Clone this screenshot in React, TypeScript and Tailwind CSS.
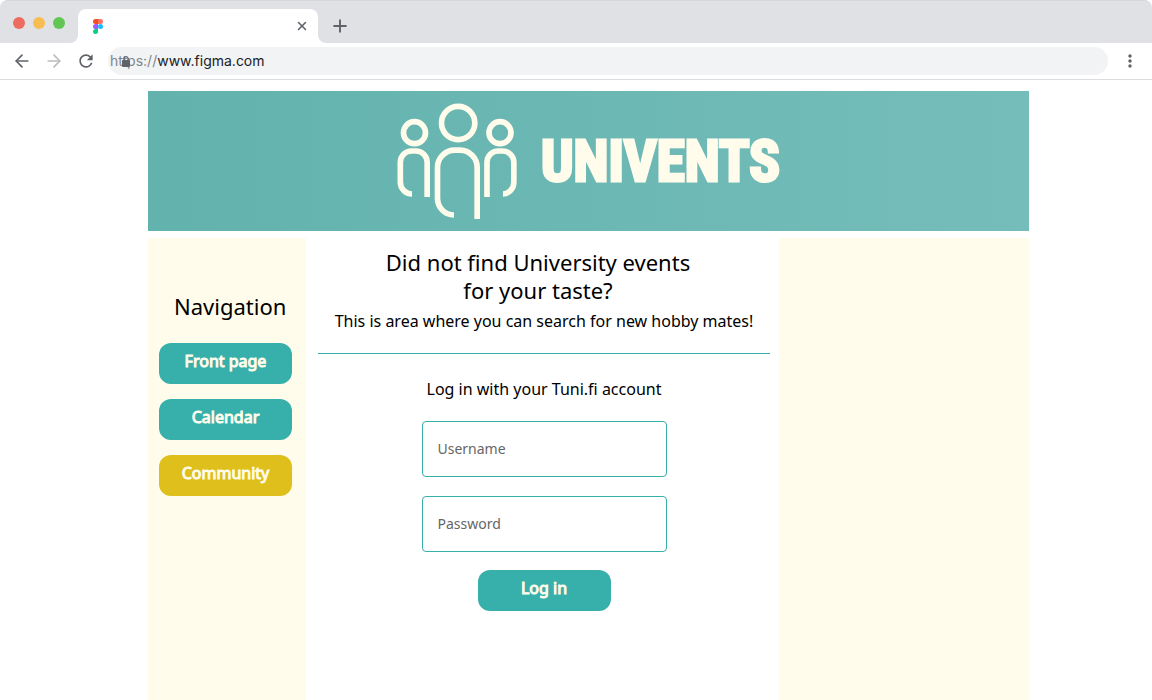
import { ArrowLeft, ArrowRight, Plus, X } from "lucide-react";
import { MdMoreVert, MdRefresh } from "react-icons/md";

function FigmaMark() {
  return (
    <svg viewBox="0 0 10 15" className="h-[15px] w-[10px]" aria-hidden="true">
      <path d="M2.5 0H5v5H2.5a2.5 2.5 0 0 1 0-5z" fill="#f24e1e" />
      <path d="M5 0h2.5a2.5 2.5 0 0 1 0 5H5z" fill="#ff7262" />
      <path d="M2.5 5H5v5H2.5a2.5 2.5 0 0 1 0-5z" fill="#a259ff" />
      <circle cx="7.5" cy="7.5" r="2.5" fill="#1abcfe" />
      <path d="M2.5 10H5v2.5A2.5 2.5 0 1 1 2.5 10z" fill="#0acf83" />
    </svg>
  );
}

function LockIcon() {
  return (
    <svg viewBox="0 0 8 11" className="absolute top-[9px] left-[14px] h-[11px] w-2" aria-hidden="true">
      <rect x="0" y="4" width="8" height="7" rx="1" fill="#5f6368" />
      <path d="M2 4.500V2.700a2 2 0 0 1 4 0V4.500" fill="none" stroke="#5f6368" strokeWidth="1.200" />
    </svg>
  );
}

function PeopleLogo() {
  return (
    <svg
      viewBox="54 38 360 348"
      className="h-[116px] w-[120px] shrink-0"
      fill="none"
      stroke="#fffceb"
      strokeWidth="17"
      aria-hidden="true"
    >
      <circle cx="237.5" cy="98" r="50" />
      <circle cx="106.5" cy="127" r="33" />
      <circle cx="363" cy="127" r="33" />
      <path d="M225 374A49.5 50 0 0 1 175.5 324V232A52 52.5 0 0 1 227.5 179.5H243A52 52.5 0 0 1 294.5 232V386" />
      <path d="M99 311A35 36 0 0 1 64 275V216A34 34 0 0 1 98 182H110A34 34 0 0 1 144.5 216V320" />
      <path d="M372 311A33 36 0 0 0 404.5 275V216A34 34 0 0 0 370 182H358A34 34 0 0 0 324 216V320" />
    </svg>
  );
}

function BrowserBar() {
  return (
    <div>
      <div className="flex h-[43px] items-end rounded-t-lg border-t border-[#d5d6d8] bg-[#dfe1e5]">
        <div className="flex gap-2 self-center pt-0.5 pl-[13px]">
          <span className="size-3 rounded-full bg-[#ed6b60]" />
          <span className="size-3 rounded-full bg-[#f6be50]" />
          <span className="size-3 rounded-full bg-[#62c655]" />
        </div>
        <div className="flex items-end pl-[5px]">
          <span className="size-2 bg-white">
            <span className="block size-2 rounded-br-lg bg-[#dfe1e5]" />
          </span>
          <div className="flex h-[34px] w-60 items-center justify-between rounded-t-lg bg-white pr-[9px] pl-[15px]">
            <FigmaMark />
            <button type="button" aria-label="Close tab">
              <X className="size-[14px] text-[#5f6368]" strokeWidth={2.6} />
            </button>
          </div>
          <span className="size-2 bg-white">
            <span className="block size-2 rounded-bl-lg bg-[#dfe1e5]" />
          </span>
        </div>
        <button type="button" aria-label="New tab" className="flex h-[34px] items-center pl-1">
          <Plus className="size-5 text-[#5f6368]" strokeWidth={2.3} />
        </button>
      </div>
      <div className="flex h-[37px] items-center border-b border-[#dadce0] bg-white px-3">
        <button type="button" aria-label="Back">
          <ArrowLeft className="size-5 text-[#5f6368]" strokeWidth={2} />
        </button>
        <button type="button" aria-label="Forward" className="ml-3">
          <ArrowRight className="size-5 text-[#babcbe]" strokeWidth={2} />
        </button>
        <button type="button" aria-label="Reload" className="ml-3">
          <MdRefresh className="size-5 text-[#5f6368]" />
        </button>
        <div className="relative ml-3 flex h-7 flex-1 items-center rounded-full bg-[#f1f3f4] pl-0.5 text-sm">
          <LockIcon />
          <label htmlFor="address" className="text-[#80868b]">
            https://
          </label>
          <input
            id="address"
            defaultValue="www.figma.com"
            className="min-w-0 flex-1 bg-transparent text-[#202124] outline-none"
          />
        </div>
        <button type="button" aria-label="Menu" className="ml-3">
          <MdMoreVert className="size-5 text-[#5f6368]" />
        </button>
      </div>
    </div>
  );
}

const pill =
  "flex h-[41px] w-[133px] items-center justify-center rounded-xl pb-[5px] text-base text-[#fffceb] [-webkit-text-stroke:1px_#fffceb]";

export default function App() {
  return (
    <div className="flex min-h-screen flex-col bg-white font-['Inter',sans-serif]">
      <BrowserBar />
      <div className="flex flex-1 flex-col pt-[11px] pr-[123px] pl-[148px] font-['Noto_Sans',sans-serif] text-black">
        <header className="flex h-[140px] items-center justify-center gap-6 bg-linear-to-r from-[#62b2ad] to-[#75bdba]">
          <PeopleLogo />
          <h1 className="font-['Roboto_Condensed','Noto_Sans_Condensed','Open_Sans_Condensed','DejaVu_Serif_Condensed',serif] text-[57px] leading-none font-bold text-[#fffceb] [-webkit-text-stroke:3px_#fffceb]">
            UNIVENTS
          </h1>
        </header>
        <div className="mt-[7px] flex flex-1">
          <nav className="w-[158px] shrink-0 bg-[#fffceb] pt-[54px] pl-[11px]">
            <h2 className="pl-[15px] text-[22px] leading-7">Navigation</h2>
            <div className="mt-[23px] flex flex-col gap-[15px]">
              <a href="#front" className={`${pill} bg-[#37b0ab]`}>
                Front page
              </a>
              <a href="#calendar" className={`${pill} bg-[#37b0ab]`}>
                Calendar
              </a>
              <a href="#community" className={`${pill} bg-[#dfbf1b]`}>
                Community
              </a>
            </div>
          </nav>
          <main className="flex flex-1 flex-col pt-[10px] pr-[9px] pl-3 text-center">
            <h2 className="pr-3 text-[22px] leading-7">
              Did not find University events
              <br />
              for your taste?
            </h2>
            <p className="mt-[5px] text-base">This is area where you can search for new hobby mates!</p>
            <hr className="mt-5 border-[#37b0ab]" />
            <form
              className="mx-auto mt-[23px] flex w-[245px] flex-col items-center"
              onSubmit={(e) => e.preventDefault()}
            >
              <p className="text-base whitespace-nowrap">Log in with your Tuni.fi account</p>
              <input
                type="text"
                aria-label="Username"
                placeholder="Username"
                className="mt-5 h-14 w-full rounded border border-[#37b0ab] px-[15px] pb-0.5 text-sm placeholder:text-[#666666]"
              />
              <input
                type="password"
                aria-label="Password"
                placeholder="Password"
                className="mt-[19px] h-14 w-full rounded border border-[#37b0ab] px-[15px] pb-0.5 text-sm placeholder:text-[#666666]"
              />
              <button type="submit" className={`${pill} mt-[18px] bg-[#37b0ab]`}>
                Log in
              </button>
            </form>
          </main>
          <aside className="w-[250px] shrink-0 bg-[#fffceb]" />
        </div>
      </div>
    </div>
  );
}
